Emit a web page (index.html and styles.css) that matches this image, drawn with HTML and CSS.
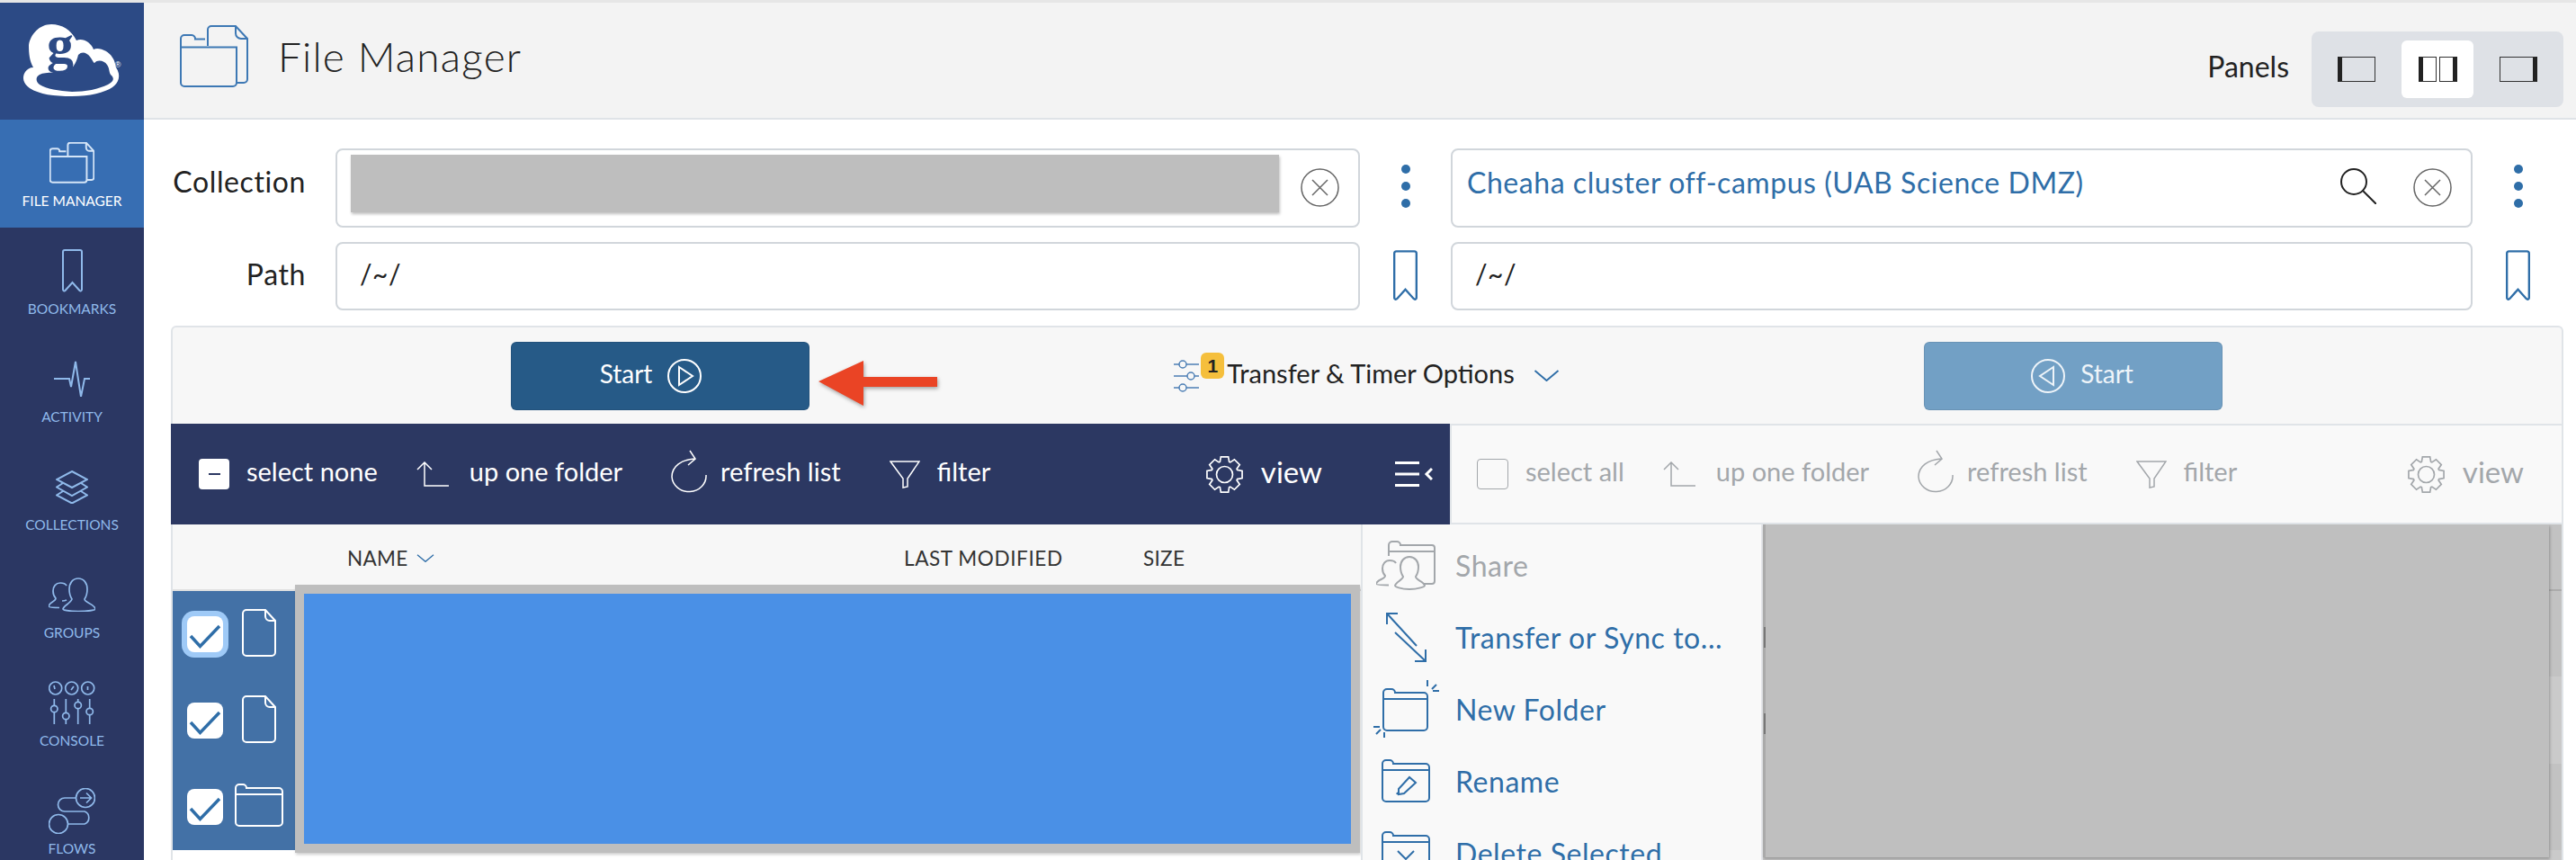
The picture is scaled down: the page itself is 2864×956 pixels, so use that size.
FILE: index.html
```html
<!DOCTYPE html>
<html lang="en">
<head>
<meta charset="utf-8">
<title>File Manager</title>
<link rel="stylesheet" href="styles.css">
</head>
<body>
<svg class="sprite" aria-hidden="true">
  <symbol id="i-files" viewBox="0 0 76 70"><path d="M1 24.500V15a4 4 0 0 1 4-4h8a4 4 0 0 1 4 4.500h11M1 24.500h62V64a4 4 0 0 1-4 4H5a4 4 0 0 1-4-4zM31 23V5a4 4 0 0 1 4-4h27l13 14v45a4 4 0 0 1-4 4h-8M62 1v8a6 6 0 0 0 6 6h7"/></symbol>
  <symbol id="i-bookmark" viewBox="0 0 23 49"><path d="M1 3a2 2 0 0 1 2-2h17a2 2 0 0 1 2 2v42a1.500 1.500 0 0 1-2.500 1L11.500 37 3.500 46A1.500 1.500 0 0 1 1 45z"/></symbol>
  <symbol id="i-activity" viewBox="0 0 40 40"><path d="M0 20h17l2 9 5-28 3 20 3 19 4-20h6"/></symbol>
  <symbol id="i-layers" viewBox="0 0 36 37"><path d="M18 1l17 9-17 9-17-9zM8 14l-7 4.500 17 9.500 17-9.500-7-4.500M8 23l-7 4.500 17 9 17-9-7-4.500"/></symbol>
  <symbol id="i-people" viewBox="0 0 52 38"><path d="M26 24c-2-3-3-7-3-11C23 6 27 1 33 1s10 5 10 12c0 4-1 8-3 11 0 4 11 5 12 11 0 1-8 2.500-19 2.500S16 36 16 35c1-4 8-6 10-11zM20 9c-1-2-4-3-7-3-5 0-8 4-8 9 0 3 1 6 3 8 0 4-7 4-8 9 0 1 5 1.500 12 1.500M20 25c-2 1-3 1-5 1"/></symbol>
  <symbol id="i-console" viewBox="0 0 52 48"><circle cx="7.700" cy="8" r="7"/><circle cx="25.700" cy="8" r="7"/><circle cx="43.700" cy="8" r="7"/><path d="M7 9 6 5M25 10l3-4M43.500 10V6M6.300 20v7M6.300 35v13M19.300 20v15M19.300 43v5M32.700 20v3M32.700 31v17M45.700 20v10M45.700 38v10"/><circle cx="6.300" cy="31" r="3.700"/><circle cx="19.300" cy="39" r="3.700"/><circle cx="32.700" cy="27" r="3.700"/><circle cx="45.700" cy="34" r="3.700"/></symbol>
  <symbol id="i-flows" viewBox="0 0 52 51"><circle cx="41" cy="11" r="10.500"/><circle cx="11" cy="40" r="10.500"/><path d="M30.500 11H18a7.500 7.500 0 0 0 0 15h22a7.500 7.500 0 0 1 0 14H21.500M35 11h12M42 5.500l5.500 5.500-5.500 5.500"/></symbol>
  <symbol id="i-up" viewBox="0 0 36 28"><path d="M1 9l8-8 8 8M9 1v26h27"/></symbol>
  <symbol id="i-refresh" viewBox="0 0 40 48"><path d="M26 10C12 11 1 18 1 30a19 17.500 0 0 0 38-2M21 1l6 9-8 7"/></symbol>
  <symbol id="i-filter" viewBox="0 0 34 31"><path d="M1 1h32L20 20v9l-5 1V20zM15 20v10"/></symbol>
  <symbol id="i-gear" viewBox="-21.500 -21.500 43 43"><path d="M14.100-5.130 19.560-4.160V4.160L14.100 5.130 13.600 6.340 16.770 10.890 10.890 16.770 6.340 13.600 5.130 14.100 4.160 19.560H-4.160L-5.130 14.100-6.340 13.600-10.890 16.770-16.770 10.890-13.600 6.340-14.100 5.130-19.560 4.160V-4.160L-14.100-5.130-13.600-6.340-16.770-10.890-10.890-16.770-6.340-13.600-5.130-14.100-4.160-19.560H4.160L5.130-14.100 6.340-13.600 10.890-16.770 16.770-10.890 13.600-6.340z"/><circle r="9"/></symbol>
  <symbol id="i-panelmenu" viewBox="0 0 42 28"><path d="M0 1.500h27M0 14h27M0 26.500h27"/><path class="thick" d="M41 8l-6 6 6 6"/></symbol>
  <symbol id="i-check" viewBox="0 0 40 40"><path d="M4 22l10.500 11.500L36 11"/></symbol>
  <symbol id="i-file" viewBox="0 0 38 53"><path d="M5 1h21l11 12v35a4 4 0 0 1-4 4H5a4 4 0 0 1-4-4V5a4 4 0 0 1 4-4zM26 1v7a5 5 0 0 0 5 5h6"/></symbol>
  <symbol id="i-folder" viewBox="0 0 54 48"><path d="M1 12V5a4 4 0 0 1 4-4h4a4 4 0 0 1 4 4h36a4 4 0 0 1 4 4v34a4 4 0 0 1-4 4H5a4 4 0 0 1-4-4zM1 12h52"/></symbol>
  <symbol id="i-search" viewBox="0 0 40 40"><circle cx="15" cy="15" r="14"/><path d="M25 25l15 15"/></symbol>
  <symbol id="i-clear" viewBox="0 0 43 43"><circle cx="21.500" cy="21.500" r="20.500"/><path d="M13 13l17 17M30 13 13 30"/></symbol>
  <symbol id="i-play" viewBox="0 0 38 38"><circle cx="19" cy="19" r="18"/><path d="M13 9l15 10-15 10z"/></symbol>
  <symbol id="i-back" viewBox="0 0 38 38"><circle cx="19" cy="19" r="18"/><path d="M25 9 10 19l15 10z"/></symbol>
  <symbol id="i-sliders" viewBox="0 0 28 38"><path d="M0 6h6M14 6h14M0 19h15M23 19h5M0 32h6M14 32h14"/><circle cx="10" cy="6" r="4"/><circle cx="19" cy="19" r="4"/><circle cx="10" cy="32" r="4"/></symbol>
  <symbol id="i-chev" viewBox="0 0 30 14"><path d="M1 1l14 12L29 1"/></symbol>
  <symbol id="i-transfer" viewBox="0 0 46 56"><path d="M2 2l33 36M11 23l34 32M2 14V2h12M33 55h12V42"/></symbol>
  <symbol id="i-newfolder" viewBox="0 0 73 64"><path d="M11 21v-7a4 4 0 0 1 4-4h5a4 4 0 0 1 4 4h32a4 4 0 0 1 4 4v34a4 4 0 0 1-4 4H15a4 4 0 0 1-4-4zM11 21h49M60 0v7M65 10l5-5M66 12h7M0 52h7M8 55l-5 5M12 58v6"/></symbol>
  <symbol id="i-rename" viewBox="0 0 54 48"><path d="M1 12V5a4 4 0 0 1 4-4h4a4 4 0 0 1 4 4h36a4 4 0 0 1 4 4v34a4 4 0 0 1-4 4H5a4 4 0 0 1-4-4zM1 12h52M19 33l12-13 7 6-13 12-6 1zM18 37l-1 2"/></symbol>
  <symbol id="i-delete" viewBox="0 0 54 48"><path d="M1 12V5a4 4 0 0 1 4-4h4a4 4 0 0 1 4 4h36a4 4 0 0 1 4 4v34a4 4 0 0 1-4 4H5a4 4 0 0 1-4-4zM1 12h52M18 22l9 9 9-9"/></symbol>
  <symbol id="i-share" viewBox="0 0 66 55"><path d="M14 17V5a4 4 0 0 1 4-4h5a4 4 0 0 1 4 4h35a3 3 0 0 1 3 3v37a3 3 0 0 1-3 3H53M14 12h51"/><path d="M30 40c-2-3-3-7-3-11 0-6 4-11 10-11s10 5 10 11c0 4-1 8-3 11 0 4 9 5 10 10 0 1-7 4-17 4s-16-3-16-4c1-4 8-6 9-10zM22 25c-1-2-4-3-7-3-5 0-8 4-8 9 0 3 1 6 3 8 0 4-9 4-10 9 0 1 5 1.500 14 1.500"/></symbol>
</svg>

<div class="app">
  <nav class="sidebar">
    <div class="logo">
      <svg class="logo-svg" viewBox="0 3 160 130">
        <path class="logo-cloud" d="M57 27C69 27 79 33 85 45C92 42 101 47 104 55C110 52 121 57 125 64C128 68 128 72 129 75C135 84 132 92 125 97C116 103 100 107 80 107C60 107 44 105 33 98C26 93 24 86 28 80C30 77 33 75 37 75C33 68 32 60 32 50C34 38 44 27 57 27Z"/>
        <path class="logo-swoosh" d="M87 61C91 57 96 58 100 63C103 67 104 70 105 70C108 66 116 67 119 72C122 76 121 80 123 83C128 87 126 91 120 94C110 99 95 102 80 102C65 101 52 99 44 94C39 90 40 85 44 83C50 80 60 81 73 81C80 78 85 70 87 61Z"/>
        <text class="logo-g" x="67" y="69" text-anchor="middle">g</text>
        <text class="logo-r" x="131" y="75" text-anchor="middle">®</text>
      </svg>
    </div>
    <a class="nav-item active"><span class="nav-icon"><svg class="ic ic-nav-files"><use href="#i-files"/></svg></span><span class="nav-label">File Manager</span></a>
    <a class="nav-item"><span class="nav-icon"><svg class="ic ic-nav-bm"><use href="#i-bookmark"/></svg></span><span class="nav-label">Bookmarks</span></a>
    <a class="nav-item"><span class="nav-icon"><svg class="ic ic-nav-act"><use href="#i-activity"/></svg></span><span class="nav-label">Activity</span></a>
    <a class="nav-item"><span class="nav-icon"><svg class="ic ic-nav-col"><use href="#i-layers"/></svg></span><span class="nav-label">Collections</span></a>
    <a class="nav-item"><span class="nav-icon"><svg class="ic ic-nav-grp"><use href="#i-people"/></svg></span><span class="nav-label">Groups</span></a>
    <a class="nav-item"><span class="nav-icon"><svg class="ic ic-nav-con"><use href="#i-console"/></svg></span><span class="nav-label">Console</span></a>
    <a class="nav-item"><span class="nav-icon"><svg class="ic ic-nav-flo"><use href="#i-flows"/></svg></span><span class="nav-label">Flows</span></a>
  </nav>

  <main class="main">
    <header class="page-head">
      <svg class="ic ic-title"><use href="#i-files"/></svg>
      <h1 class="page-title">File Manager</h1>
      <span class="panels-label">Panels</span>
      <div class="panels">
        <button class="panel-btn"><span class="pane pane-wide bar-left"></span></button>
        <button class="panel-btn on"><span class="pane pane-half bar-left"></span><span class="pane pane-half bar-right"></span></button>
        <button class="panel-btn"><span class="pane pane-wide bar-right"></span></button>
      </div>
    </header>

    <section class="content">
      <div class="locations">
        <label class="loc-label label-coll">Collection</label>
        <div class="field field-coll">
          <div class="redact-name"></div>
          <svg class="ic ic-clear"><use href="#i-clear"/></svg>
        </div>
        <div class="kebab"><i></i><i></i><i></i></div>
        <div class="field field-coll">
          <span class="coll-name">Cheaha cluster off-campus (UAB Science DMZ)</span>
          <svg class="ic ic-search"><use href="#i-search"/></svg>
          <svg class="ic ic-clear"><use href="#i-clear"/></svg>
        </div>
        <div class="kebab"><i></i><i></i><i></i></div>

        <label class="loc-label">Path</label>
        <div class="field field-path">/~/</div>
        <svg class="ic ic-bm"><use href="#i-bookmark"/></svg>
        <div class="field field-path">/~/</div>
        <svg class="ic ic-bm"><use href="#i-bookmark"/></svg>
      </div>

      <div class="options">
        <button class="start start-on"><span class="start-text">Start</span><svg class="ic ic-play"><use href="#i-play"/></svg></button>
        <svg class="callout" viewBox="0 0 140 60"><path d="M4 27 54 4V22H136V33H54V54z"/></svg>
        <div class="opt-center">
          <svg class="ic ic-sliders"><use href="#i-sliders"/></svg>
          <span class="badge">1</span>
          <span class="opt-text">Transfer &amp; Timer Options</span>
          <svg class="ic ic-chev"><use href="#i-chev"/></svg>
        </div>
        <button class="start start-off"><svg class="ic ic-play"><use href="#i-back"/></svg><span class="start-text">Start</span></button>
      </div>

      <div class="toolbars">
        <div class="toolbar tb-dark">
          <div class="tool t-select"><span class="minus-box"><i></i></span><span>select none</span></div>
          <div class="tool t-up"><svg class="ic ic-up"><use href="#i-up"/></svg><span>up one folder</span></div>
          <div class="tool t-refresh"><svg class="ic ic-refresh"><use href="#i-refresh"/></svg><span>refresh list</span></div>
          <div class="tool t-filter"><svg class="ic ic-filter"><use href="#i-filter"/></svg><span>filter</span></div>
          <div class="tool t-view"><svg class="ic ic-gear"><use href="#i-gear"/></svg><span class="view-text">view</span></div>
          <svg class="ic ic-panelmenu"><use href="#i-panelmenu"/></svg>
        </div>
        <div class="toolbar tb-light">
          <div class="tool t-select"><span class="empty-box"></span><span>select all</span></div>
          <div class="tool t-up"><svg class="ic ic-up"><use href="#i-up"/></svg><span>up one folder</span></div>
          <div class="tool t-refresh"><svg class="ic ic-refresh"><use href="#i-refresh"/></svg><span>refresh list</span></div>
          <div class="tool t-filter"><svg class="ic ic-filter"><use href="#i-filter"/></svg><span>filter</span></div>
          <div class="tool t-view"><svg class="ic ic-gear"><use href="#i-gear"/></svg><span class="view-text">view</span></div>
        </div>
      </div>

      <div class="browser">
        <div class="list">
          <div class="list-head">
            <span class="col col-name">NAME <svg class="ic ic-sort"><use href="#i-chev"/></svg></span>
            <span class="col col-mod">LAST MODIFIED</span>
            <span class="col col-size">SIZE</span>
          </div>
          <div class="list-rows">
            <div class="sel-col">
              <div class="sel-row"><span class="check focus"><svg class="ic ic-check"><use href="#i-check"/></svg></span><span class="type-cell"><svg class="ic ic-file"><use href="#i-file"/></svg></span></div>
              <div class="sel-row"><span class="check"><svg class="ic ic-check"><use href="#i-check"/></svg></span><span class="type-cell"><svg class="ic ic-file"><use href="#i-file"/></svg></span></div>
              <div class="sel-row"><span class="check"><svg class="ic ic-check"><use href="#i-check"/></svg></span><span class="type-cell"><svg class="ic ic-folder"><use href="#i-folder"/></svg></span></div>
            </div>
            <div class="redact-list"></div>
          </div>
        </div>
        <aside class="menu">
          <div class="menu-item disabled"><span class="menu-ic"><svg class="ic m-share"><use href="#i-share"/></svg></span>Share</div>
          <div class="menu-item"><span class="menu-ic"><svg class="ic m-transfer"><use href="#i-transfer"/></svg></span>Transfer or Sync to...</div>
          <div class="menu-item"><span class="menu-ic"><svg class="ic m-new"><use href="#i-newfolder"/></svg></span>New Folder</div>
          <div class="menu-item"><span class="menu-ic"><svg class="ic m-folder"><use href="#i-rename"/></svg></span>Rename</div>
          <div class="menu-item"><span class="menu-ic"><svg class="ic m-folder"><use href="#i-delete"/></svg></span>Delete Selected</div>
        </aside>
        <div class="right-cell">
          <div class="redact-right"></div>
        </div>
      </div>
    </section>
  </main>
</div>
</body>
</html>
```

FILE: styles.css
```css
* { box-sizing: border-box; }
html, body { margin: 0; padding: 0; height: 100%; overflow: hidden; background: #fff; }
body { font-family: Lato, "Open Sans", sans-serif; color: #222; }
.sprite { display: none; }
.ic { display: block; flex: none; fill: none; stroke: currentColor; stroke-width: 2; overflow: visible; }
.thick { stroke-width: 3; }

.app { display: flex; width: 2864px; height: 956px; padding-top: 3px; background: #e6e6e6; overflow: hidden; }

/* sidebar */
.sidebar { width: 160px; flex: none; background: #2b3763; height: 1000px; }
.logo { height: 130px; background: #2c4a85; }
.logo-svg { display: block; width: 160px; height: 130px; }
.logo-cloud { fill: #fff; }
.logo-swoosh { fill: #2c4a85; }
.logo-g { font-family: "Liberation Serif", serif; font-weight: 700; font-size: 60px; fill: #2c4a85; }
.logo-r { font-family: "Liberation Sans", sans-serif; font-size: 9px; fill: #fff; }
.nav-item { display: block; height: 120px; padding-top: 18px; color: #8fb9ea; text-align: center; }
.nav-item.active { background: #376eb3; color: #fff; }
.nav-icon { display: flex; align-items: center; justify-content: center; height: 60px; }
.nav-item.active .ic { color: #d5e5f7; }
.nav-label { display: block; height: 24px; line-height: 24px; font-size: 15.500px; text-transform: uppercase; }
.ic-nav-files { width: 50px; height: 46px; stroke-width: 3; }
.ic-nav-bm { width: 23px; height: 49px; }
.ic-nav-act { width: 40px; height: 40px; }
.ic-nav-col { width: 36px; height: 37px; }
.ic-nav-grp { width: 52px; height: 38px; stroke-width: 1.700; }
.ic-nav-con { width: 52px; height: 48px; stroke-width: 1.700; }
.ic-nav-flo { width: 52px; height: 51px; stroke-width: 1.700; }

/* header */
.main { flex: 1; min-width: 0; background: #fff; }
.page-head { display: flex; align-items: center; height: 130px; padding: 0 14px 3px 40px; background: #f3f3f3; border-bottom: 2px solid #dfe3e7; }
.ic-title { width: 76px; height: 70px; color: #3d78b4; margin-top: -6px; }
.page-title { margin: -7px 0 0 33px; font-size: 46px; font-weight: 300; letter-spacing: 1.200px; color: #222; flex: 1; }
.panels-label { font-size: 32px; font-weight: 400; margin: 16px 25px 0 0; color: #222; }
.panels { display: flex; align-items: center; justify-content: space-between; width: 280px; height: 84px; margin-top: 22px; padding: 0 10px; background: #dee1e6; border-radius: 8px; }
.panel-btn { display: flex; align-items: center; justify-content: center; gap: 3px; width: 80px; height: 64px; padding: 0; border: 0; background: none; border-radius: 6px; }
.panel-btn.on { background: #fff; }
.pane { display: block; height: 28px; border: 1.500px solid #333; }
.pane-wide { width: 42px; }
.pane-half { width: 20px; }
.bar-left { border-left: 5px solid #222; }
.bar-right { border-right: 5px solid #222; }

/* content */
.content { padding: 32px 14px 0 30px; }
.locations { display: grid; grid-template-columns: 183px 1139px 101px 1136px 101px; grid-template-rows: 88px 76px; row-gap: 16px; align-items: center; }
.loc-label { justify-self: end; margin: -6px 33px 0 0; font-size: 32px; letter-spacing: .6px; font-weight: 400; color: #222; }
.label-coll { margin-top: -15px; }
.field { height: 100%; border: 2px solid #d1d6db; border-radius: 8px; background: #fff; }
.field-coll { display: flex; align-items: center; padding: 0 21px 0 15px; }
.field-path { padding-left: 25px; font-size: 30px; line-height: 66px; letter-spacing: .5px; font-weight: 400; color: #222; }
.redact-name { width: 1032px; height: 64px; margin-top: -10px; background: #bebebe; box-shadow: 1px 2px 3px rgba(0,0,0,.25); }
.coll-name { flex: 1; margin-top: -14px; font-size: 32px; letter-spacing: .55px; font-weight: 400; color: #2f6ea8; padding-left: 1px; }
.ic-clear { width: 43px; height: 43px; margin-left: auto; margin-top: -2px; color: #666; stroke-width: 1.500; }
.ic-search { width: 40px; height: 40px; margin-right: 41px; margin-top: -4px; color: #222; }
.kebab { display: flex; flex-direction: column; align-items: center; gap: 9px; margin-top: -4px; }
.kebab i { width: 10px; height: 10px; border-radius: 50%; background: #2f6ea8; }
.ic-bm { width: 27px; height: 60px; justify-self: center; color: #2f6ea8; }

/* options band */
.options { position: relative; display: flex; align-items: center; justify-content: space-between; height: 109px; margin-top: 17px; padding: 0 379px 0 378px; background: #f7f7f7; border: 2px solid #e0e4e8; border-bottom: 0; border-radius: 6px 6px 0 0; }
.start { display: flex; align-items: center; justify-content: center; gap: 17px; width: 332px; height: 76px; margin: 0 -2px; border: 1px solid rgba(0,0,0,.08); border-radius: 6px; color: #fff; font: 400 28px Lato, sans-serif; }
.start-text { margin-top: -6px; }
.start-on { background: #265a87; padding-right: 27px; }
.start-off { background: #72a0c5; color: #eef4f9; padding-left: 26px; }
.ic-play { width: 38px; height: 38px; }
.callout { position: absolute; left: 714px; top: 33px; display: block; width: 140px; height: 60px; fill: #ea4425; stroke: none; filter: drop-shadow(1px 2px 2px rgba(0,0,0,.35)); }
.opt-center { display: flex; align-items: center; }
.ic-sliders { width: 28px; height: 38px; color: #4d7fb5; stroke-width: 1.500; }
.badge { width: 26px; height: 29px; margin: -22px 3px 0 2px; border-radius: 6px; background: #f5bf3c; font: 700 21px/29px "Liberation Sans", sans-serif; text-align: center; color: #222; }
.opt-text { margin-top: -7px; font-size: 29px; font-weight: 400; color: #222; }
.ic-chev { width: 29px; height: 13px; margin-left: 21px; color: #2f6ea8; }

/* toolbars */
.toolbars { display: flex; height: 112px; }
.toolbar { display: flex; align-items: center; }
.tb-dark { width: 1422px; padding-left: 31px; background: #2c3862; color: #fff; }
.tb-light { width: 1238px; padding-left: 28px; background: #f9f9f9; color: #a3a7ab; border: 2px solid #e0e4e8; }
.tool { display: flex; align-items: center; font-size: 29px; font-weight: 400; }
.tool span { margin-top: -7px; }
.t-select { gap: 19px; }
.t-up { margin-left: 43px; gap: 23px; }
.t-refresh { margin-left: 54px; gap: 15px; }
.t-filter { margin-left: 54px; gap: 19px; }
.t-view { margin-left: auto; gap: 19px; }
.tool .view-text { font-size: 33px; }
.tb-dark .t-view { margin-right: 81px; }
.tb-light .t-view { margin-right: 42px; }
.tool .minus-box, .tool .empty-box { margin-top: 0; }
.minus-box { display: flex; align-items: center; justify-content: center; width: 34px; height: 34px; border-radius: 4px; background: #fff; }
.minus-box i { width: 13px; height: 2.500px; background: #2c3862; }
.empty-box { width: 35px; height: 34px; border: 1.500px solid #a3a7ab; border-radius: 4px; }
.ic-up { width: 36px; height: 28px; stroke-width: 1.500; }
.ic-refresh { width: 40px; height: 48px; margin-top: -6px; stroke-width: 1.500; }
.ic-filter { width: 34px; height: 31px; stroke-width: 1.500; }
.ic-gear { width: 43px; height: 43px; stroke-width: 1.700; }
.ic-panelmenu { width: 42px; height: 28px; margin-right: 19px; stroke-width: 3; }

/* browser */
.browser { display: grid; grid-template-columns: 1323px 447px 890px; height: 373px; }
.list { min-width: 0; border-left: 2px solid #e0e4e8; }
.list-head { display: flex; align-items: center; height: 74px; background: #f7f7f7; border-bottom: 2px solid #e0e0e0; font-size: 22.500px; letter-spacing: .3px; color: #333; font-weight: 400; }
.col { display: flex; align-items: center; margin-top: 2px; }
.col-name { margin-left: 194px; gap: 9px; width: 619px; }
.col-mod { width: 266px; letter-spacing: .6px; }
.ic-sort { width: 20px; height: 9px; color: #2f6ea8; }
.list-rows { display: flex; align-items: flex-start; }
.sel-col { width: 136px; height: 288px; flex: none; background: #4371a6; }
.sel-row { display: flex; align-items: center; height: 96px; padding-left: 16px; }
.check { display: block; width: 40px; height: 40px; flex: none; border-radius: 8px; background: #fff; color: #2f6ea8; }
.check.focus { box-shadow: 0 0 0 6px #9fcaf7; }
.ic-check { width: 40px; height: 40px; stroke-width: 3.500; }
.type-cell { display: flex; justify-content: center; width: 54px; margin: -4px 0 0 13px; color: #fff; }
.ic-file { width: 38px; height: 53px; }
.ic-folder { width: 54px; height: 48px; }
.redact-list { width: 1184px; height: 298px; flex: none; margin-top: -7px; border: 10px solid #bebebe; background: #4a90e6; box-shadow: 1px 2px 3px rgba(0,0,0,.2); }

.menu { min-width: 0; padding-top: 5px; background: #f9f9f9; border-left: 2px solid #e0e4e8; border-right: 2px solid #e6e8ec; overflow: hidden; }
.menu-item { display: flex; align-items: center; height: 80px; font-size: 32px; letter-spacing: .55px; font-weight: 400; color: #2f6ea8; white-space: nowrap; }
.menu-item.disabled { color: #a3a7ab; }
.menu-ic { display: flex; align-items: center; justify-content: center; width: 96px; margin-right: 7px; flex: none; }
.m-share { width: 66px; height: 55px; }
.m-transfer { width: 46px; height: 56px; }
.m-new { width: 73px; height: 64px; }
.m-folder { width: 54px; height: 48px; }

.right-cell { position: relative; border-right: 2px solid #e0e4e8; background: linear-gradient(#c2c2c2 72px, #ababab 72px, #ababab 74px, #c2c2c2 74px, #c2c2c2 169px, #cacaca 169px, #cacaca 266px, #c2c2c2 266px, #c2c2c2 362px, #cacaca 362px); }
.redact-right { width: 874px; height: 370px; background: #bfbfbf; box-shadow: inset 3px 0 0 #aaa, 1px 2px 3px rgba(0,0,0,.25); }
.right-cell::before { content: ""; position: absolute; left: 1px; top: 114px; z-index: 1; width: 2px; height: 119px; background: linear-gradient(#777 23px, transparent 23px, transparent 96px, #777 96px); }
```
